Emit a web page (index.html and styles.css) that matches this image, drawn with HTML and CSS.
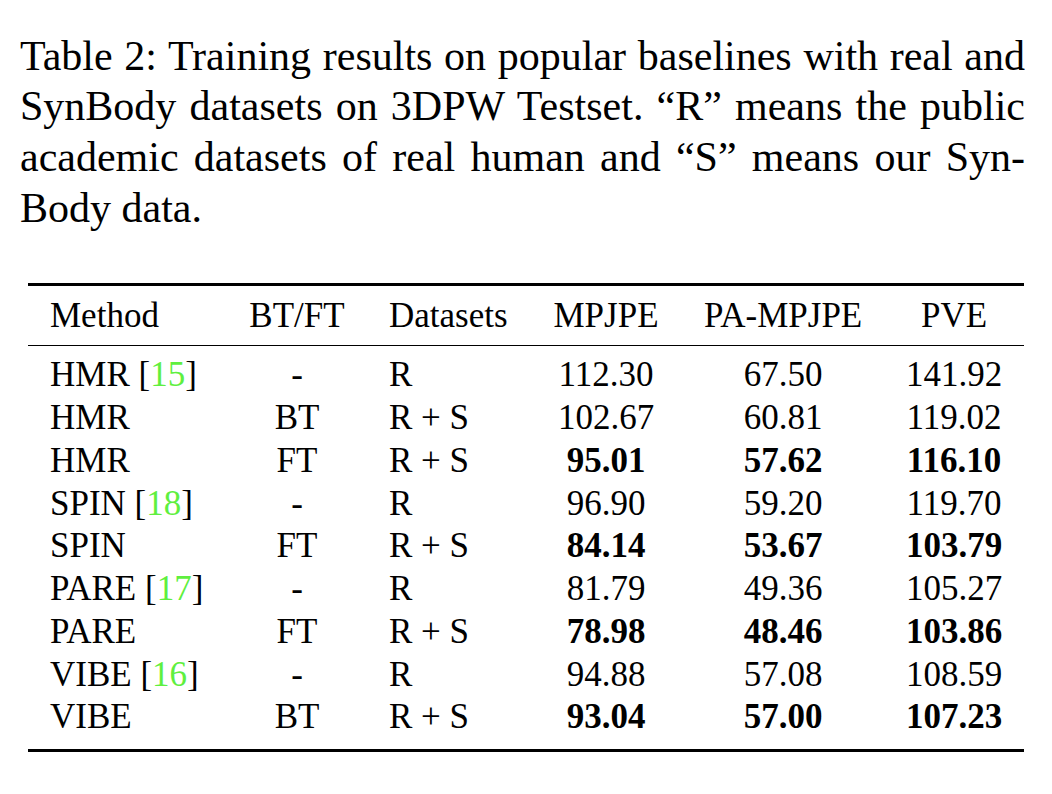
FILE: index.html
```html
<!DOCTYPE html>
<html lang="en">
<head>
<meta charset="utf-8">
<title>Table 2</title>
<link rel="stylesheet" href="styles.css">
</head>
<body>
<div class="page">
  <p class="caption">
    <span class="line">Table 2: Training results on popular baselines with real and</span>
    <span class="line">SynBody datasets on 3DPW Testset. “R” means the public</span>
    <span class="line">academic datasets of real human and “S” means our Syn-</span>
    <span class="line last">Body data.</span>
  </p>
  <table class="results">
    <colgroup>
      <col class="c-method"><col class="c-bt"><col class="c-data"><col class="c-mpjpe"><col class="c-pa"><col class="c-pve">
    </colgroup>
    <thead>
      <tr>
        <th class="left">Method</th>
        <th>BT/FT</th>
        <th class="left">Datasets</th>
        <th>MPJPE</th>
        <th>PA-MPJPE</th>
        <th>PVE</th>
      </tr>
    </thead>
    <tbody>
      <tr><td class="left">HMR [<span class="cite">15</span>]</td><td>-</td><td class="left">R</td><td>112.30</td><td>67.50</td><td>141.92</td></tr>
      <tr><td class="left">HMR</td><td>BT</td><td class="left">R + S</td><td>102.67</td><td>60.81</td><td>119.02</td></tr>
      <tr><td class="left">HMR</td><td>FT</td><td class="left">R + S</td><td class="best">95.01</td><td class="best">57.62</td><td class="best">116.10</td></tr>
      <tr><td class="left">SPIN [<span class="cite">18</span>]</td><td>-</td><td class="left">R</td><td>96.90</td><td>59.20</td><td>119.70</td></tr>
      <tr><td class="left">SPIN</td><td>FT</td><td class="left">R + S</td><td class="best">84.14</td><td class="best">53.67</td><td class="best">103.79</td></tr>
      <tr><td class="left">PARE [<span class="cite">17</span>]</td><td>-</td><td class="left">R</td><td>81.79</td><td>49.36</td><td>105.27</td></tr>
      <tr><td class="left">PARE</td><td>FT</td><td class="left">R + S</td><td class="best">78.98</td><td class="best">48.46</td><td class="best">103.86</td></tr>
      <tr><td class="left">VIBE [<span class="cite">16</span>]</td><td>-</td><td class="left">R</td><td>94.88</td><td>57.08</td><td>108.59</td></tr>
      <tr><td class="left">VIBE</td><td>BT</td><td class="left">R + S</td><td class="best">93.04</td><td class="best">57.00</td><td class="best">107.23</td></tr>
    </tbody>
  </table>
</div>
</body>
</html>
```

FILE: styles.css
```css
html, body {
  margin: 0;
  padding: 0;
  background: #ffffff;
}

body {
  font-family: "Liberation Serif", "Times New Roman", serif;
  color: #000000;
}

.page {
  width: 1052px;
  height: 794px;
  overflow: hidden;
}

.caption {
  margin: 30.5px 0 0 20px;
  width: 1005px;
  font-size: 42px;
  line-height: 50.7px;
}

.caption .line {
  display: block;
  text-align: justify;
  text-align-last: justify;
}

.caption .line.last {
  text-align: left;
  text-align-last: left;
}

.results {
  margin: 49.7px 0 0 28px;
  width: 996px;
  table-layout: fixed;
  border-collapse: separate;
  border-spacing: 0;
  font-size: 35px;
  line-height: 42.75px;
}

.c-method { width: 199px; }
.c-bt { width: 140px; }
.c-data { width: 163px; }
.c-mpjpe { width: 152px; }
.c-pa { width: 202px; }
.c-pve { width: 140px; }

.results th,
.results td {
  padding: 0 22px;
  text-align: center;
  white-space: nowrap;
  font-weight: normal;
}

.results .left {
  text-align: left;
}

.results th {
  border-top: 3px solid #000;
  border-bottom: 1.5px solid #000;
  padding-top: 8.5px;
  padding-bottom: 7.5px;
}

.results tbody tr:first-child td {
  padding-top: 8.5px;
}

.results tbody tr:last-child td {
  padding-bottom: 10px;
  border-bottom: 3px solid #000;
}

.results td.best {
  font-weight: bold;
}

.cite {
  color: #5fef3f;
}
```
